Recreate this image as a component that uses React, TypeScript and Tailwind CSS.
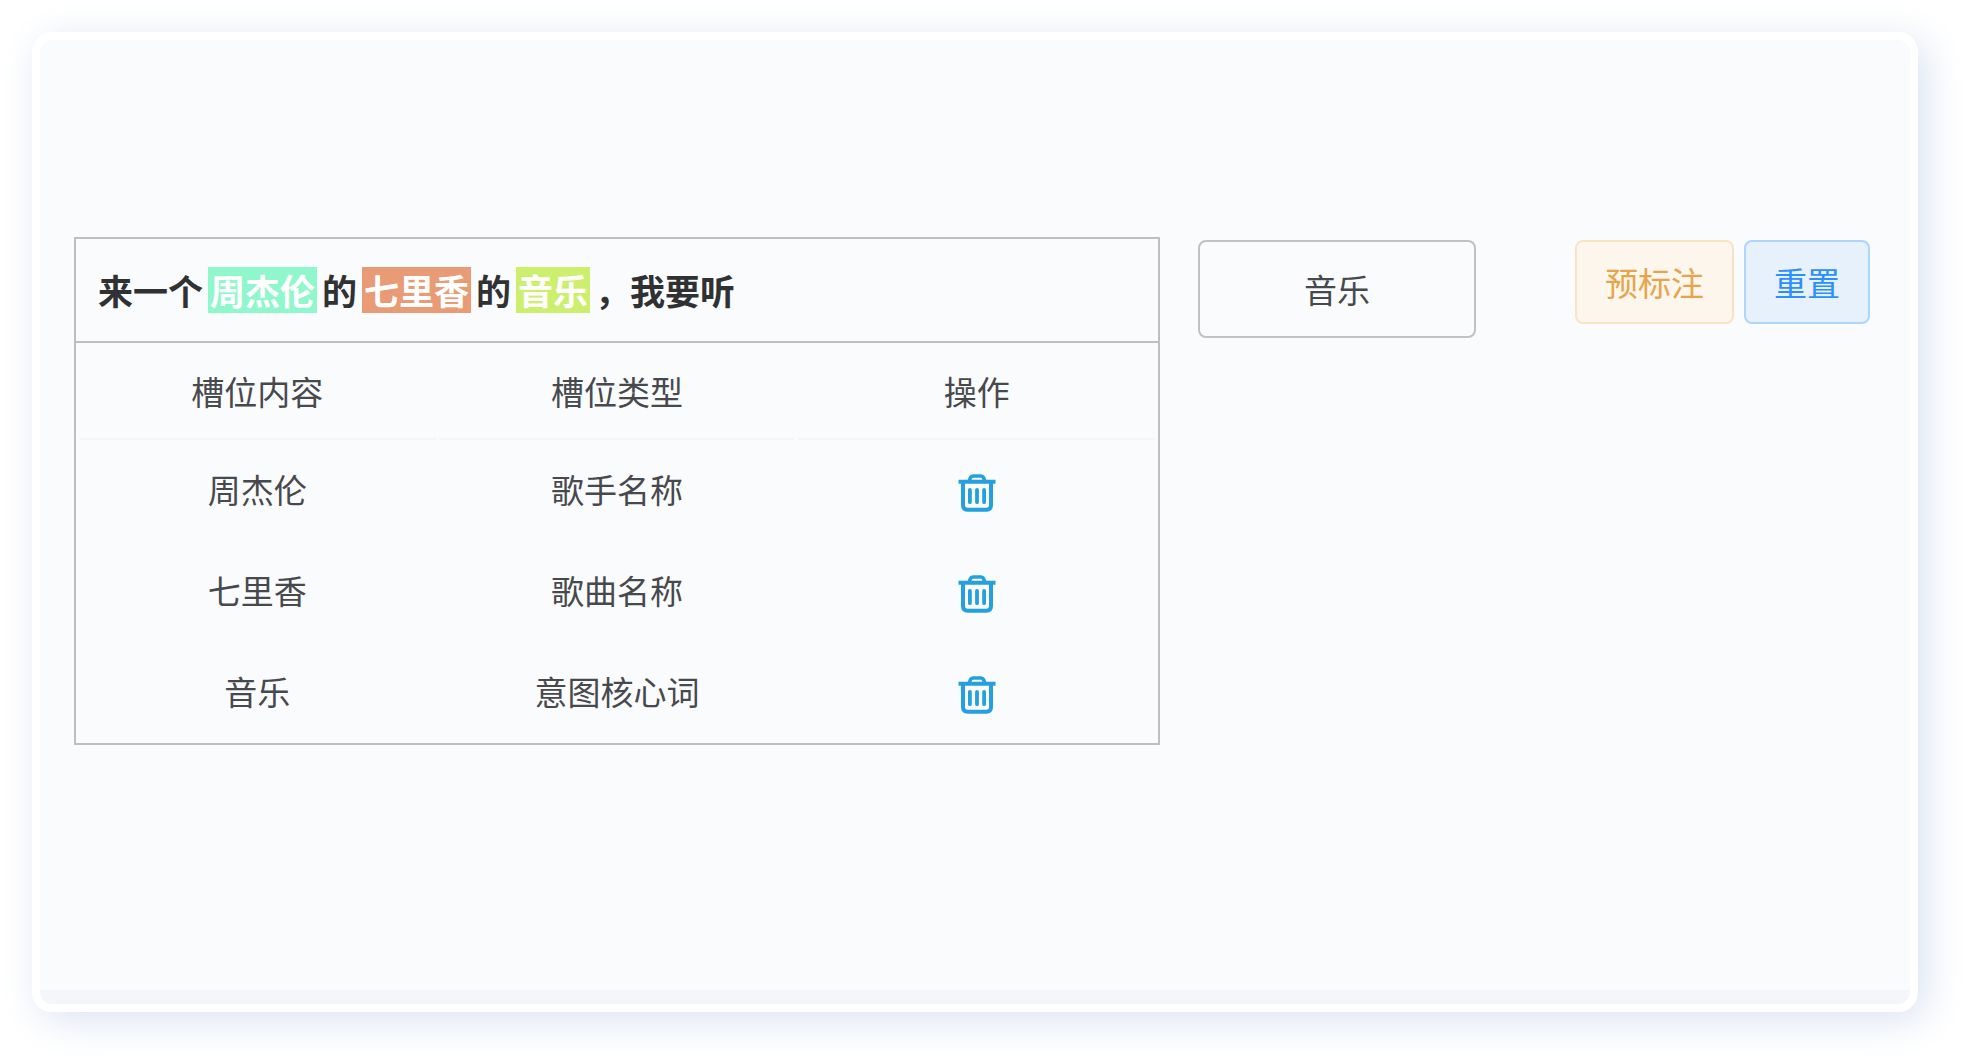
import { useCallback, useMemo, useState } from "react";

type SlotType = "singer" | "song" | "core";

type Slot = {
  content: string;
  type: SlotType;
}

type Segment = {
  text: string;
  slot?: Slot;
}

const slotLabels: Record<SlotType, string> = {
  singer: "歌手名称",
  song: "歌曲名称",
  core: "意图核心词",
};

const slotColors: Record<SlotType, string> = {
  singer: "bg-[#8ff7cb]",
  song: "bg-[#e89b75]",
  core: "bg-[#ccf06e]",
};

const columns = ["槽位内容", "槽位类型", "操作"];

const sentence = "来一个周杰伦的七里香的音乐，我要听";

const defaultSlots: Slot[] = [
  { content: "周杰伦", type: "singer" },
  { content: "七里香", type: "song" },
  { content: "音乐", type: "core" },
];

// splits the sentence into plain and labelled parts
function splitSentence(text: string, slots: Slot[]): Segment[] {
  const segments: Segment[] = [];
  let rest = text;

  slots.forEach((slot) => {
    const index = rest.indexOf(slot.content);
    if (index < 0) return;
    if (index > 0) segments.push({ text: rest.slice(0, index) });
    segments.push({ text: slot.content, slot });
    rest = rest.slice(index + slot.content.length);
  });

  if (rest) segments.push({ text: rest });
  return segments;
}

function TrashIcon() {
  return (
    <svg
      className="size-[38px]"
      viewBox="0 0 38 38"
      fill="none"
      stroke="#25a0df"
      strokeWidth="4"
      aria-hidden="true"
    >
      <path d="M0.5 7.8H37.5" />
      <path d="M11 7.5L12.4 3.6Q13.2 2 15 2H23Q24.8 2 25.6 3.6L27 7.5" strokeWidth="3.6" />
      <path d="M5 8V31Q5 35.7 9.7 35.7H28.3Q33 35.7 33 31V8" />
      <path d="M11.9 15.8V28.2M19 15.8V28.2M26.1 15.8V28.2" strokeLinecap="round" strokeWidth="3.8" />
    </svg>
  );
}

function App() {
  const [slots, setSlots] = useState<Slot[]>(defaultSlots);
  const [intent, setIntent] = useState("音乐");

  const segments = useMemo(() => splitSentence(sentence, slots), [slots]);

  const handleOnDelete = useCallback((content: string) => {
    setSlots((prev) => prev.filter((slot) => slot.content !== content));
  }, []);

  const handleOnReset = useCallback(() => {
    setSlots([]);
    setIntent("");
  }, []);

  const handleOnPreLabel = useCallback(() => {
    setSlots(defaultSlots);
    setIntent("音乐");
  }, []);

  return (
    <div className="flex min-h-screen bg-white pt-8 pr-12 pb-12 pl-8 font-['Noto_Sans_CJK_SC',sans-serif] text-[33px] leading-[46px] text-[#48494d]">
      <main className="flex flex-1 flex-col overflow-hidden rounded-[20px] border-8 border-white bg-[#fafbfd] shadow-[8px_8px_40px_#dae2f0]">
        <div className="flex flex-1 items-start pt-[197px] pr-10 pb-10 pl-[34px]">
          <section className="min-w-0 flex-1 border-2 border-[#bebfc0]">
            <p className="flex min-h-[104px] items-center border-b-2 border-[#bebfc0] px-[22px] text-[35px] font-bold text-[#303133]">
              {segments.map((segment, index) => {
                if (!segment.slot) {
                  return <span key={index}>{segment.text}</span>;
                }

                return (
                  <mark
                    key={index}
                    className={`mx-[5px] px-[2px] text-white ${slotColors[segment.slot.type]}`}
                  >
                    {segment.text}
                  </mark>
                );
              })}
            </p>
            <table className="w-full table-fixed border-separate border-spacing-x-[3px] border-spacing-y-0 text-center">
              <thead>
                <tr className="h-[97px]">
                  {columns.map((column) => (
                    <th key={column} className="border-b-2 border-[#f5f6f9] font-normal">
                      {column}
                    </th>
                  ))}
                </tr>
              </thead>
              <tbody>
                {slots.map((slot) => (
                  <tr key={slot.content} className="h-[101px]">
                    <td className="pb-[3px]">{slot.content}</td>
                    <td className="pb-[3px]">{slotLabels[slot.type]}</td>
                    <td className="pt-1">
                      <button
                        type="button"
                        aria-label={`删除${slot.content}`}
                        onClick={() => handleOnDelete(slot.content)}
                        className="mx-auto block cursor-pointer"
                      >
                        <TrashIcon />
                      </button>
                    </td>
                  </tr>
                ))}
              </tbody>
            </table>
          </section>
          <input
            type="text"
            aria-label="意图"
            value={intent}
            onChange={(e: React.ChangeEvent<HTMLInputElement>) => setIntent(e.target.value)}
            className="mt-[3px] ml-[38px] h-[98px] w-[278px] rounded-lg border-2 border-[#c0c1c2] text-center outline-none"
          />
          <div className="mt-[3px] ml-[99px] flex shrink-0 gap-[10px]">
            <button
              type="button"
              onClick={handleOnPreLabel}
              className="h-[84px] w-[159px] rounded-lg border-2 border-[#f9e3c4] bg-[#fdf6ec] text-[#e6a54c]"
            >
              预标注
            </button>
            <button
              type="button"
              onClick={handleOnReset}
              className="h-[84px] w-[126px] rounded-lg border-2 border-[#aed5fd] bg-[#e6f1fc] text-[#2b8ffd]"
            >
              重置
            </button>
          </div>
        </div>
        <div className="h-[14px] bg-[#f5f6f9]" />
      </main>
    </div>
  );
}

export default App;
